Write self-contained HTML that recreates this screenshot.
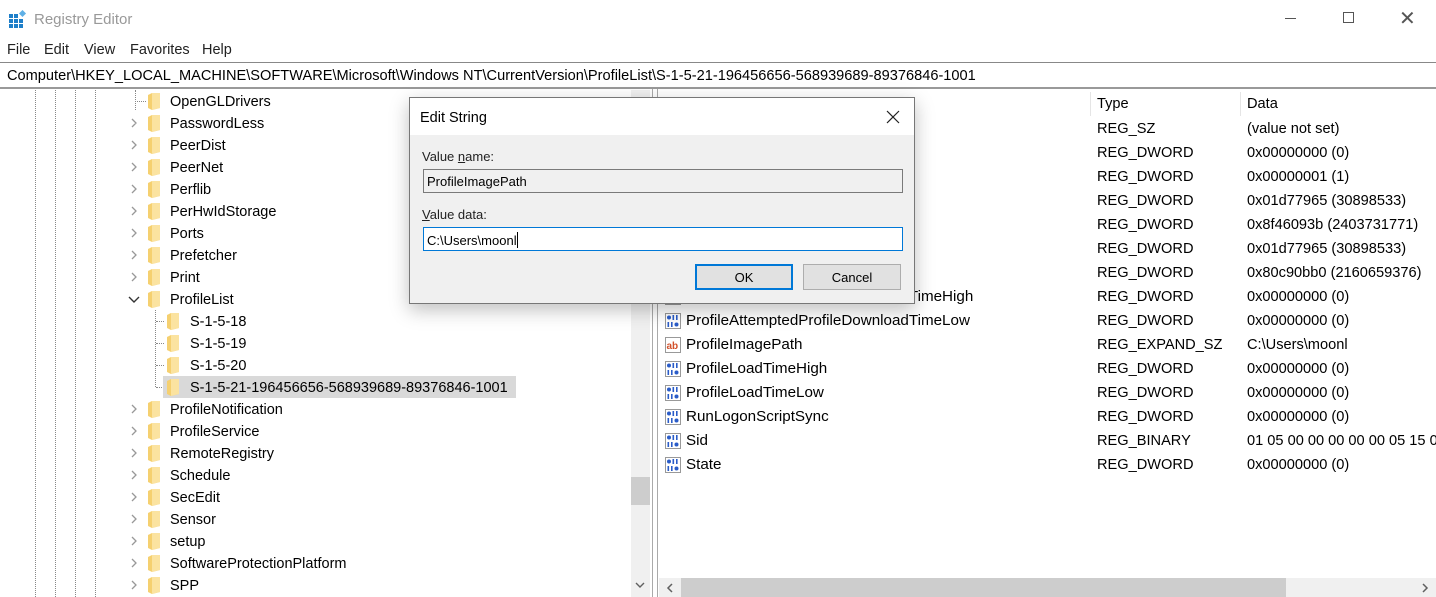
<!DOCTYPE html>
<html><head><meta charset="utf-8"><style>
*{margin:0;padding:0;box-sizing:border-box}
body{width:1436px;height:597px;overflow:hidden;background:#fff;font-family:"Liberation Sans",sans-serif;font-size:14.5px;color:#000;position:relative}
.a{position:absolute;white-space:nowrap}
.dot{position:absolute;width:0;border-left:1px dotted #888}
.hd{position:absolute;height:0;border-top:1px dotted #888}
.t{position:absolute;white-space:nowrap;line-height:22px;top:1px}
.r{position:absolute;white-space:nowrap;line-height:24px;font-size:15.2px}
.c{position:absolute;white-space:nowrap;line-height:24px;font-size:14.6px}
</style></head><body>
<svg class="a" style="left:9px;top:10px" width="18" height="18" viewBox="0 0 18 18"><g fill="#1e7fc9"><rect x="0" y="4" width="4" height="4"/><rect x="5" y="4" width="4" height="4"/><rect x="0" y="9" width="4" height="4"/><rect x="5" y="9" width="4" height="4"/><rect x="10" y="9" width="4" height="4"/><rect x="0" y="14" width="4" height="4"/><rect x="5" y="14" width="4" height="4"/><rect x="10" y="14" width="4" height="4"/></g><rect x="11" y="1" width="5" height="5" fill="#5fb0e6" transform="rotate(45 13.5 3.5)"/></svg>
<div class="a" style="left:34px;top:11px;color:#999;font-size:15px">Registry Editor</div>
<div class="a" style="left:1285px;top:18px;width:11px;border-top:1px solid #555"></div>
<div class="a" style="left:1343px;top:12px;width:11px;height:11px;border:1px solid #555"></div>
<div class="a" style="left:1399px;top:6px;font-size:20px;color:#555">✕</div>
<div class="a" style="left:7px;top:42px;color:#222">File</div>
<div class="a" style="left:44px;top:42px;color:#222">Edit</div>
<div class="a" style="left:84px;top:42px;color:#222">View</div>
<div class="a" style="left:130px;top:42px;color:#222">Favorites</div>
<div class="a" style="left:202px;top:42px;color:#222">Help</div>
<div class="a" style="left:0;top:62px;width:1436px;height:27px;border-top:1px solid #888;border-bottom:2px solid #999"></div>
<div class="a" style="left:7px;top:68px;font-size:14.6px">Computer\HKEY_LOCAL_MACHINE\SOFTWARE\Microsoft\Windows NT\CurrentVersion\ProfileList\S-1-5-21-196456656-568939689-89376846-1001</div>
<div class="dot" style="left:35px;top:90px;height:507px"></div>
<div class="dot" style="left:55px;top:90px;height:507px"></div>
<div class="dot" style="left:75px;top:90px;height:507px"></div>
<div class="dot" style="left:95px;top:90px;height:507px"></div>
<div class="dot" style="left:135px;top:90px;height:20px"></div>
<div class="dot" style="left:155px;top:310px;height:77px"></div>
<div class="hd" style="left:137px;top:101px;width:9px"></div>
<div class="hd" style="left:156px;top:321px;width:8px"></div>
<div class="hd" style="left:156px;top:343px;width:8px"></div>
<div class="hd" style="left:156px;top:365px;width:8px"></div>
<div class="hd" style="left:156px;top:387px;width:8px"></div>
<div class="a" style="left:163px;top:376px;width:353px;height:22px;background:#d9d9d9"></div>
<svg width="0" height="0" style="position:absolute"><defs><g id="f"><path d="M0 2 L4 0 L12 0 L12 15 L4 17 L0 15Z" fill="#f5d070"/><path d="M4 0 L12 0 L12 15 L4 17Z" fill="#fbe3a0"/></g></defs></svg>
<svg style="position:absolute;left:0;top:0" width="660" height="597">
<g fill="none" stroke="#999" stroke-width="1.3">
<path d="M132 119l4 4-4 4M132 141l4 4-4 4M132 163l4 4-4 4M132 185l4 4-4 4M132 207l4 4-4 4M132 229l4 4-4 4M132 251l4 4-4 4M132 273l4 4-4 4"/>
<path d="M132 405l4 4-4 4M132 427l4 4-4 4M132 449l4 4-4 4M132 471l4 4-4 4M132 493l4 4-4 4M132 515l4 4-4 4M132 537l4 4-4 4M132 559l4 4-4 4M132 581l4 4-4 4"/>
</g>
<path d="M129 297l5 5 5-5" fill="none" stroke="#333" stroke-width="1.4"/>
<g transform="translate(148,93)"><use href="#f"/></g>
<g transform="translate(148,115)"><use href="#f"/></g>
<g transform="translate(148,137)"><use href="#f"/></g>
<g transform="translate(148,159)"><use href="#f"/></g>
<g transform="translate(148,181)"><use href="#f"/></g>
<g transform="translate(148,203)"><use href="#f"/></g>
<g transform="translate(148,225)"><use href="#f"/></g>
<g transform="translate(148,247)"><use href="#f"/></g>
<g transform="translate(148,269)"><use href="#f"/></g>
<g transform="translate(148,291)"><use href="#f"/></g>
<g transform="translate(167,313)"><use href="#f"/></g>
<g transform="translate(167,335)"><use href="#f"/></g>
<g transform="translate(167,357)"><use href="#f"/></g>
<g transform="translate(167,379)"><use href="#f"/></g>
<g transform="translate(148,401)"><use href="#f"/></g>
<g transform="translate(148,423)"><use href="#f"/></g>
<g transform="translate(148,445)"><use href="#f"/></g>
<g transform="translate(148,467)"><use href="#f"/></g>
<g transform="translate(148,489)"><use href="#f"/></g>
<g transform="translate(148,511)"><use href="#f"/></g>
<g transform="translate(148,533)"><use href="#f"/></g>
<g transform="translate(148,555)"><use href="#f"/></g>
<g transform="translate(148,577)"><use href="#f"/></g>
</svg>
<div style="position:absolute;left:0;top:91px;width:630px;height:506px">
<div class="t" style="left:170px;top:0">OpenGLDrivers</div>
<div class="t" style="left:170px;top:22px">PasswordLess</div>
<div class="t" style="left:170px;top:44px">PeerDist</div>
<div class="t" style="left:170px;top:66px">PeerNet</div>
<div class="t" style="left:170px;top:88px">Perflib</div>
<div class="t" style="left:170px;top:110px">PerHwIdStorage</div>
<div class="t" style="left:170px;top:132px">Ports</div>
<div class="t" style="left:170px;top:154px">Prefetcher</div>
<div class="t" style="left:170px;top:176px">Print</div>
<div class="t" style="left:170px;top:198px">ProfileList</div>
<div class="t" style="left:190px;top:220px">S-1-5-18</div>
<div class="t" style="left:190px;top:242px">S-1-5-19</div>
<div class="t" style="left:190px;top:264px">S-1-5-20</div>
<div class="t" style="left:190px;top:286px">S-1-5-21-196456656-568939689-89376846-1001</div>
<div class="t" style="left:170px;top:308px">ProfileNotification</div>
<div class="t" style="left:170px;top:330px">ProfileService</div>
<div class="t" style="left:170px;top:352px">RemoteRegistry</div>
<div class="t" style="left:170px;top:374px">Schedule</div>
<div class="t" style="left:170px;top:396px">SecEdit</div>
<div class="t" style="left:170px;top:418px">Sensor</div>
<div class="t" style="left:170px;top:440px">setup</div>
<div class="t" style="left:170px;top:462px">SoftwareProtectionPlatform</div>
<div class="t" style="left:170px;top:484px">SPP</div>
</div>
<div class="a" style="left:631px;top:90px;width:19px;height:507px;background:#f0f0f0"></div>
<div class="a" style="left:631px;top:477px;width:19px;height:28px;background:#cdcdcd"></div>
<svg class="a" style="left:634px;top:580px" width="12" height="10"><path d="M2 3l4 4 4-4" fill="none" stroke="#606060" stroke-width="1.4"/></svg>
<div class="a" style="left:652px;top:89px;width:1px;height:508px;background:#aaa"></div>
<div class="a" style="left:657px;top:89px;width:1px;height:508px;background:#aaa"></div>
<div class="a" style="left:1090px;top:92px;width:1px;height:24px;background:#e5e5e5"></div>
<div class="a" style="left:1240px;top:92px;width:1px;height:24px;background:#e5e5e5"></div>
<div class="a" style="left:1097px;top:96px;font-size:14.6px">Type</div>
<div class="a" style="left:1247px;top:96px;font-size:14.6px">Data</div>
<svg width="0" height="0" style="position:absolute"><defs>
<g id="d"><rect x="0.5" y="0.5" width="15" height="15" fill="#fff" stroke="#999"/><g fill="#2a5cc8"><circle cx="4" cy="4.5" r="2"/><rect x="7.5" y="2" width="1.6" height="5"/><rect x="11" y="2" width="1.6" height="5"/><rect x="2.5" y="9" width="1.6" height="5"/><rect x="6" y="9" width="1.6" height="5"/><circle cx="11.5" cy="11.5" r="2"/></g></g>
<g id="s"><rect x="0.5" y="0.5" width="15" height="15" fill="#fff" stroke="#999"/><text x="1.5" y="12" font-size="10" font-weight="bold" fill="#d2502a" font-family="Liberation Sans">ab</text></g>
</defs></svg>
<svg class="a" style="left:665px;top:289px" width="16" height="16"><use href="#d"/></svg>
<svg class="a" style="left:665px;top:313px" width="16" height="16"><use href="#d"/></svg>
<svg class="a" style="left:665px;top:337px" width="16" height="16"><use href="#s"/></svg>
<svg class="a" style="left:665px;top:361px" width="16" height="16"><use href="#d"/></svg>
<svg class="a" style="left:665px;top:385px" width="16" height="16"><use href="#d"/></svg>
<svg class="a" style="left:665px;top:409px" width="16" height="16"><use href="#d"/></svg>
<svg class="a" style="left:665px;top:433px" width="16" height="16"><use href="#d"/></svg>
<svg class="a" style="left:665px;top:457px" width="16" height="16"><use href="#d"/></svg>
<div class="r" style="left:686px;top:285px">ProfileAttemptedProfileDownloadTimeHigh</div>
<div class="r" style="left:686px;top:309px">ProfileAttemptedProfileDownloadTimeLow</div>
<div class="r" style="left:686px;top:333px">ProfileImagePath</div>
<div class="r" style="left:686px;top:357px">ProfileLoadTimeHigh</div>
<div class="r" style="left:686px;top:381px">ProfileLoadTimeLow</div>
<div class="r" style="left:686px;top:405px">RunLogonScriptSync</div>
<div class="r" style="left:686px;top:429px">Sid</div>
<div class="r" style="left:686px;top:453px">State</div>
<div class="c" style="left:1097px;top:117px">REG_SZ<br>REG_DWORD<br>REG_DWORD<br>REG_DWORD<br>REG_DWORD<br>REG_DWORD<br>REG_DWORD<br>REG_DWORD<br>REG_DWORD<br>REG_EXPAND_SZ<br>REG_DWORD<br>REG_DWORD<br>REG_DWORD<br>REG_BINARY<br>REG_DWORD</div>
<div class="c" style="left:1247px;top:117px">(value not set)<br>0x00000000 (0)<br>0x00000001 (1)<br>0x01d77965 (30898533)<br>0x8f46093b (2403731771)<br>0x01d77965 (30898533)<br>0x80c90bb0 (2160659376)<br>0x00000000 (0)<br>0x00000000 (0)<br>C:\Users\moonl<br>0x00000000 (0)<br>0x00000000 (0)<br>0x00000000 (0)<br>01 05 00 00 00 00 00 05 15 00<br>0x00000000 (0)</div>
<div class="a" style="left:659px;top:578px;width:777px;height:19px;background:#f0f0f0"></div>
<div class="a" style="left:681px;top:578px;width:605px;height:19px;background:#cdcdcd"></div>
<svg class="a" style="left:664px;top:582px" width="12" height="12"><path d="M8 2l-4 4 4 4" fill="none" stroke="#606060" stroke-width="1.5"/></svg>
<svg class="a" style="left:1419px;top:582px" width="12" height="12"><path d="M4 2l4 4-4 4" fill="none" stroke="#606060" stroke-width="1.5"/></svg>
<div class="a" style="left:409px;top:97px;width:506px;height:207px;background:#f0f0f0;border:1px solid #777;box-shadow:0 6px 18px rgba(0,0,0,.25)">
 <div class="a" style="left:0;top:0;width:504px;height:37px;background:#fff"></div>
 <div class="a" style="left:10px;top:12px;font-size:14.5px">Edit String</div>
 <svg class="a" style="left:476px;top:12px" width="14" height="14"><path d="M1 1l12 12M13 1L1 13" stroke="#222" stroke-width="1.2"/></svg>
 <div class="a" style="left:12px;top:51px;font-size:13px;color:#222">Value <u>n</u>ame:</div>
 <div class="a" style="left:13px;top:71px;width:480px;height:24px;border:1px solid #7a7a7a;background:#f0f0f0;font-size:13px;padding:4px 0 0 3px">ProfileImagePath</div>
 <div class="a" style="left:12px;top:109px;font-size:13px;color:#222"><u>V</u>alue data:</div>
 <div class="a" style="left:13px;top:129px;width:480px;height:24px;border:1px solid #0078d7;background:#fff;font-size:13px;padding:4px 0 0 3px">C:\Users\moonl<span style="display:inline-block;width:1px;height:16px;background:#000;vertical-align:-3px"></span></div>
 <div class="a" style="left:285px;top:166px;width:98px;height:26px;border:2px solid #0078d7;background:#e1e1e1;font-size:13px;text-align:center;line-height:23px">OK</div>
 <div class="a" style="left:393px;top:166px;width:98px;height:26px;border:1px solid #adadad;background:#e1e1e1;font-size:13px;text-align:center;line-height:25px">Cancel</div>
</div>
</body></html>
